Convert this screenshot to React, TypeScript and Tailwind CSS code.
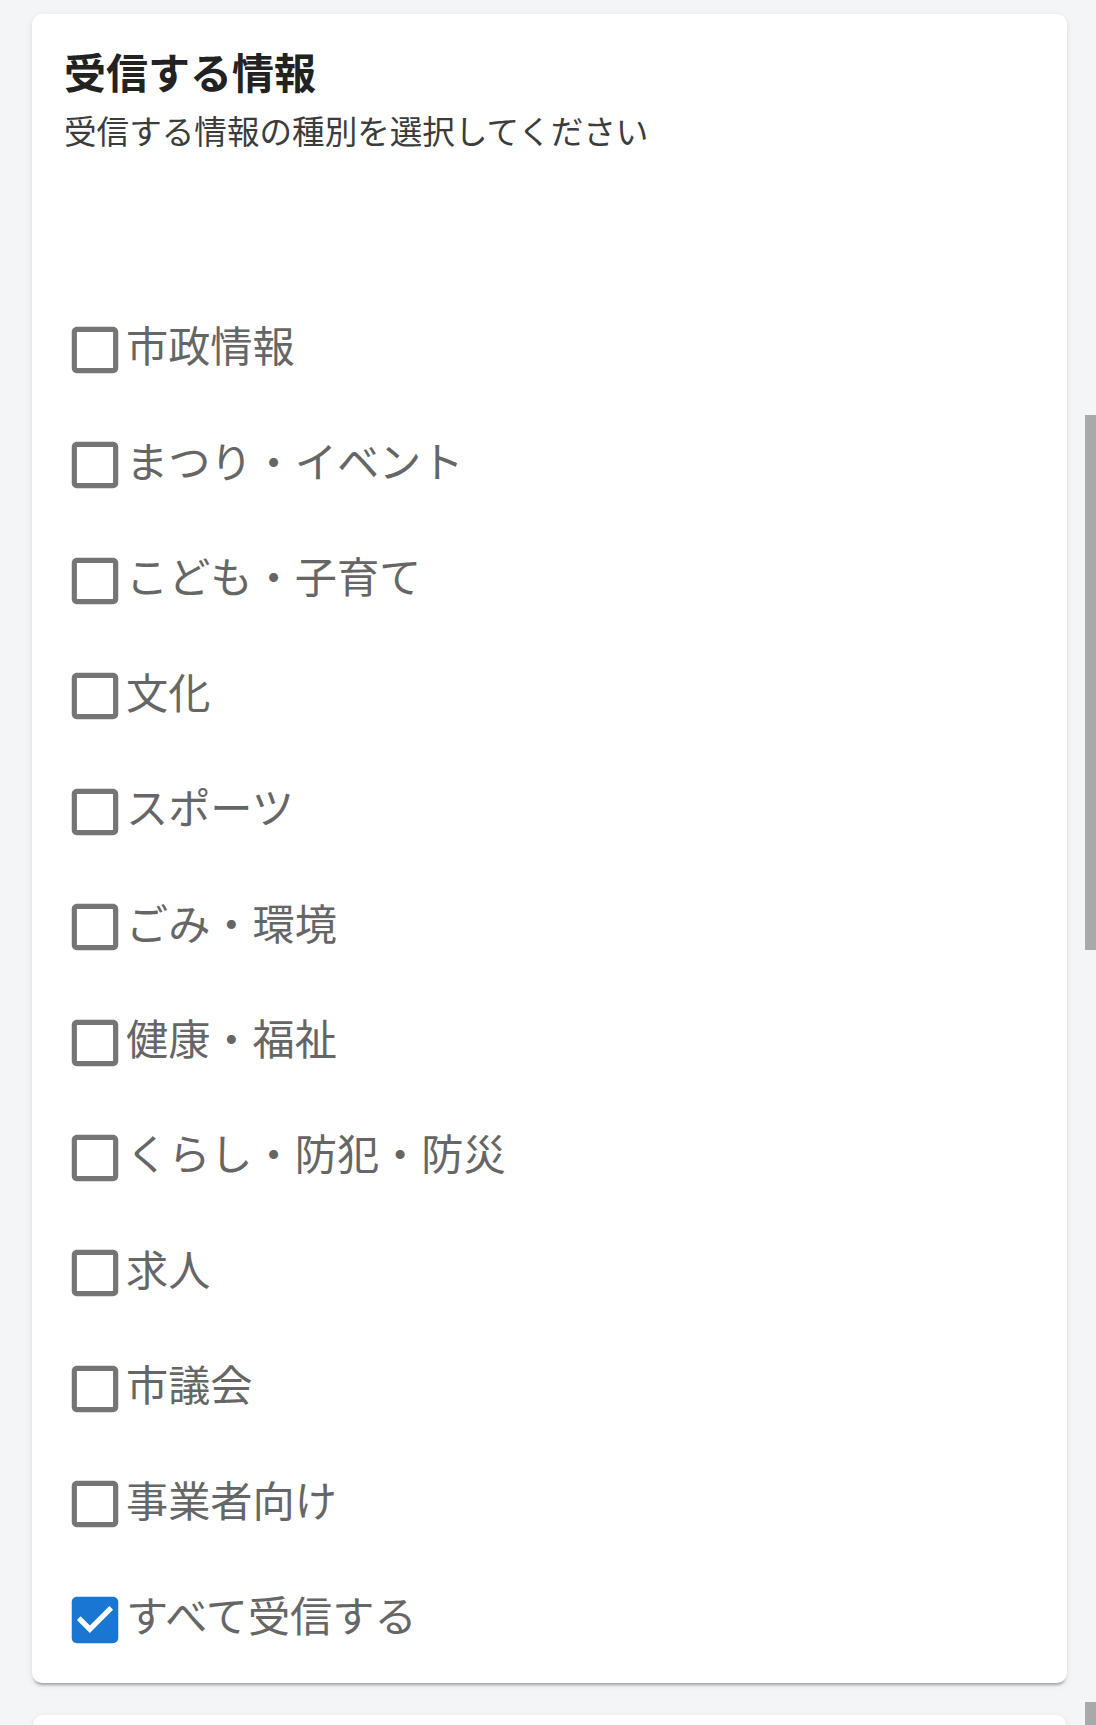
import React from "react";

const items = [
  "市政情報",
  "まつり・イベント",
  "こども・子育て",
  "文化",
  "スポーツ",
  "ごみ・環境",
  "健康・福祉",
  "くらし・防犯・防災",
  "求人",
  "市議会",
  "事業者向け",
  "すべて受信する",
];

function UncheckedIcon() {
  return (
    <svg width="62" height="62" viewBox="0 0 24 24" className="shrink-0">
      <path
        fill="#757575"
        d="M19 5v14H5V5h14m0-2H5c-1.1 0-2 .9-2 2v14c0 1.1.9 2 2 2h14c1.1 0 2-.9 2-2V5c0-1.1-.9-2-2-2z"
      />
    </svg>
  );
}

function CheckedIcon() {
  return (
    <svg width="62" height="62" viewBox="0 0 24 24" className="shrink-0">
      <rect x="4" y="4" width="16" height="16" fill="#ffffff" />
      <path
        fill="#1976d2"
        d="M19 3H5c-1.11 0-2 .9-2 2v14c0 1.1.89 2 2 2h14c1.11 0 2-.9 2-2V5c0-1.1-.89-2-2-2zm-9 14l-5-5 1.41-1.41L10 14.17l7.59-7.59L19 8l-9 9z"
      />
    </svg>
  );
}

export default function App() {
  return (
    <div
      className="relative w-[1096px] h-[1725px] overflow-hidden bg-[#f4f5f7]"
      style={{ fontFamily: '"Noto Sans CJK JP", "Noto Sans", sans-serif' }}
    >
      <div className="ml-[32px] mt-[14px] w-[1035px] h-[1669px] bg-white rounded-[10px] shadow-[0_4px_3px_-2px_rgba(0,0,0,0.28),0_2px_6px_0_rgba(0,0,0,0.10)] px-[32px] pt-[25px]">
        <h2 className="text-[42px] leading-[63px] font-bold text-[#222222]">受信する情報</h2>
        <p className="mt-[3.6px] text-[32.6px] leading-[48px] text-[#3c3c3c]">
          受信する情報の種別を選択してください
        </p>
        <div className="mt-[138.6px] flex flex-col">
          {items.map((label, i) => (
            <label key={label} className="flex h-[115.45px] items-center">
              {i === items.length - 1 ? <CheckedIcon /> : <UncheckedIcon />}
              <span className="-mt-[11px] text-[42.2px] leading-[62px] text-[#666666]">{label}</span>
            </label>
          ))}
        </div>
      </div>
      <div className="ml-[33px] mt-[32px] w-[1033px] h-[200px] bg-white rounded-[10px] shadow-[0_2px_6px_0_rgba(0,0,0,0.10)]" />
      <div className="absolute right-0 top-[415px] w-[11px] h-[535px] bg-[#a8a9ab]" />
      <div className="absolute right-0 top-[1702px] w-[11px] h-[23px] bg-[#a8a9ab]" />
    </div>
  );
}
